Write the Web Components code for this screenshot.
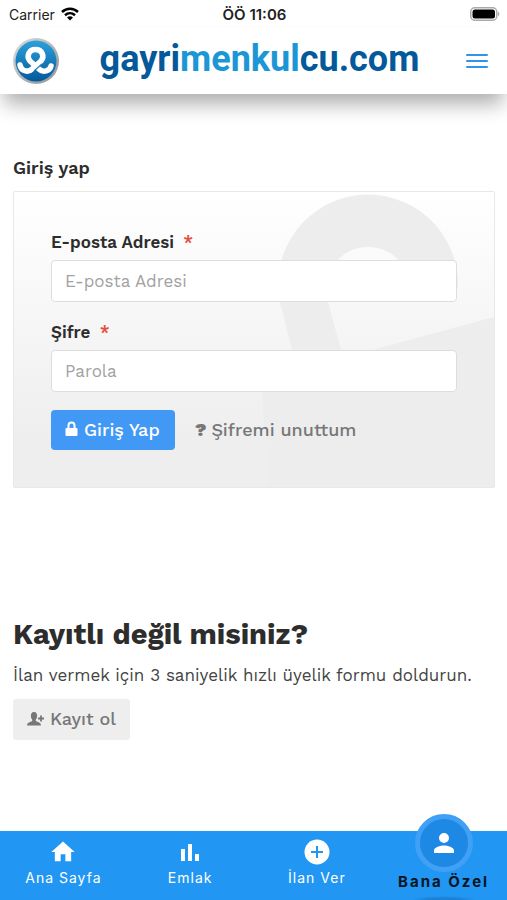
<!DOCTYPE html>
<html lang="tr">
<head>
<meta charset="utf-8">
<meta name="viewport" content="width=device-width, initial-scale=1">
<title>gayrimenkulcu.com</title>
<style>
html,body{margin:0}
body{font-family:"Work Sans",Inter,"Liberation Sans",sans-serif;color:#333;background:#fff}
</style>
</head>
<body>
<login-page></login-page>
<script>
function define(name, html, setup) {
  const tpl = document.createElement('template');
  tpl.innerHTML = html;
  customElements.define(name, class extends HTMLElement {
    connectedCallback() {
      if (this.shadowRoot) return;
      const root = this.attachShadow({mode: 'open'});
      root.append(tpl.content.cloneNode(true));
      if (setup) setup(this, root);
    }
  });
}

define('status-bar', `
<style>
:host{display:grid;grid-template-columns:1fr auto 1fr;align-items:center;height:28px;padding:0 7px 0 9px;font-family:Inter,"Liberation Sans",sans-serif;font-size:14px;color:#222}
.left{display:flex;align-items:center;gap:6px}
.time{font-size:15px;font-weight:600}
.battery{justify-self:end}
svg{display:block}
</style>
<div class="left"><span>Carrier</span>
<svg width="18" height="14" viewBox="0 0 18 14" fill="none" stroke="#000" stroke-width="2.5"><path d="M1 5C5.500 .7 12.500 .7 17 5M4 8.200C7 5.500 11 5.500 14 8.200"/><path d="M9 13.500 6 10.500Q9 8 12 10.500Z" fill="#000" stroke="none"/></svg></div>
<span class="time">ÖÖ 11:06</span>
<svg class="battery" width="30" height="14" viewBox="0 0 30 14"><rect x=".75" y=".75" width="26" height="12.500" rx="4" fill="#fff" stroke="#aaa" stroke-width="1.500"/><rect x="2.500" y="2.500" width="22.500" height="9" rx="2.500" fill="#000"/><path d="M28 4.500Q31 7 28 9.500Z" fill="#aaa"/></svg>`);

define('site-header', `
<style>
:host{display:grid;grid-template-columns:50px 1fr 22px;align-items:center;height:66px;padding:0 19px 0 11px;background:#fff;box-shadow:0 14px 20px -4px rgba(0,0,0,.32);box-sizing:border-box}
svg{display:block}
a{text-decoration:none}
.word{justify-self:center;margin-right:8px;font:700 36px/44px Roboto,"Liberation Sans",sans-serif;color:#04599b;padding-bottom:4px}
.word span{color:#1c97d5}
button{border:0;background:none;padding:0;cursor:pointer}
</style>
<a href="#" aria-label="Ana Sayfa"><svg width="50" height="50" viewBox="0 0 50 50">
<defs><linearGradient id="b" x2="0" y2="1"><stop stop-color="#2ba1dc"/><stop offset="1" stop-color="#04599b"/></linearGradient><linearGradient id="s" x2="1" y2="1"><stop stop-color="#ddd"/><stop offset="1" stop-color="#8b9297"/></linearGradient></defs>
<circle cx="25" cy="25" r="23" fill="url(#s)"/><circle cx="25" cy="25" r="20.500" fill="url(#b)"/>
<path d="M9 29C10 35 17 37 21 33L30 25C34 20 31 13.500 24.500 13.500S15 20 19 25L28 33C32 37 39 35 40 30" fill="none" stroke="#fff" stroke-width="5.500" stroke-linecap="round" stroke-linejoin="round"/><path d="M23 35 31 28" stroke="#187dbb" stroke-width="1.200"/></svg></a>
<a class="word" href="#">gayri<span>menkul</span>cu.com</a>
<button aria-label="Menü"><svg width="22" height="16" viewBox="0 0 22 16" stroke="#2e95ea" stroke-width="2" stroke-linecap="round"><path d="M1 2H21M1 8H21M1 14H21"/></svg></button>`);

define('form-field', `
<style>
:host{display:block}
label{display:block;font-size:17px;line-height:22px;font-weight:600;color:#2d2d2d}
.req{color:#e74c3c;margin-left:4px}
input{display:block;box-sizing:border-box;width:100%;height:42px;margin-top:7px;padding:0 13px;border:1px solid #ddd;border-radius:4px;background:#fff;font:17px "Work Sans",Inter,"Liberation Sans",sans-serif;color:#333;outline:0}
input::placeholder{color:#a2a2a2;opacity:1}
</style>
<label for="f"><slot></slot> <span class="req">*</span></label>
<input id="f">`, (host, root) => {
  const input = root.querySelector('input');
  input.type = host.getAttribute('type');
  input.placeholder = host.getAttribute('placeholder');
});

define('login-card', `
<style>
:host{display:block;position:relative;border:1px solid #e8e8e8;border-radius:2px;background:linear-gradient(#fff,#eee 85%);padding:39px 37px 37px;overflow:hidden}
.art{position:absolute;top:0;right:0}
form{position:relative;display:grid;gap:19px}
.actions{display:flex;align-items:center;gap:20px;margin-top:-1px}
button{display:flex;align-items:center;gap:6px;height:40px;padding:0 15px 2px 14px;border:0;border-radius:4px;background:#4299f5;color:#fff;font:500 18px "Work Sans",Inter,"Liberation Sans",sans-serif;cursor:pointer}
a{display:flex;gap:5px;padding-bottom:2px;color:#777;text-decoration:none;font-size:18px;font-weight:500}
a b{font-weight:900}
</style>
<svg class="art" width="240" height="296" viewBox="254 192 240 296" fill="#ededed" aria-hidden="true">
<path d="M283 314A90 90 0 1 1 458 288H410A42 42 0 1 0 327 298L341 350 354 355 494 317V488H268L262 391 298 374Z"/></svg>
<form onsubmit="return false">
<form-field type="email" placeholder="E-posta Adresi">E-posta Adresi</form-field>
<form-field type="password" placeholder="Parola">Şifre</form-field>
<div class="actions"><button><svg width="13" height="16" viewBox="0 0 12 16"><path d="M3 8V4.500a3 3 0 0 1 6 0V8" fill="none" stroke="#fff" stroke-width="2"/><rect y="7" width="12" height="8" rx="1" fill="#fff"/></svg>Giriş Yap</button>
<a href="#"><b>?</b><span>Şifremi unuttum</span></a></div>
</form>`);

define('signup-block', `
<style>
:host{display:block}
h2{margin:0;font-size:29px;line-height:36px;font-weight:700;color:#2d2d2d}
p{margin:12px 0 13px;font-size:17px;line-height:22px;color:#444}
a{display:inline-flex;align-items:center;gap:5px;height:39px;padding:0 14px 2px;border-radius:3px;background:#eee;color:#777;font-size:18px;font-weight:500;text-decoration:none}
</style>
<h2>Kayıtlı değil misiniz?</h2>
<p>İlan vermek için 3 saniyelik hızlı üyelik formu doldurun.</p>
<a href="#"><svg width="18" height="16" viewBox="0 0 18 16" fill="#777"><path d="M7 1C9.500 1 10.500 3 10 6 9.800 7.500 9 8 8.800 9V10L12.500 11.700Q14 12.500 14 14.500H0Q0 12.500 1.500 11.700L5.200 10V9C5 8 4.200 7.500 4 6 3.500 3 4.500 1 7 1Z"/><path d="M14 4.500V10.500M11 7.500H17" stroke="#777" stroke-width="1.800"/></svg>Kayıt ol</a>`);

define('tab-item', `
<style>
:host{display:block;color:#fff}
a{display:flex;flex-direction:column;align-items:center;color:inherit;text-decoration:none;font:14px/18px Inter,"Liberation Sans",sans-serif;letter-spacing:1px}
.icon{display:flex;align-items:center;justify-content:center;height:24px;margin:9px 0 5px;box-sizing:border-box}
:host([active]) a{font-size:15px;font-weight:700;color:#071521;letter-spacing:2px}
:host([active]) .icon{width:58px;height:58px;margin:-17px 0 1px;border:5px solid #40a0f6;border-radius:50%;background:#1e88e5}
::slotted(svg){display:block}
</style>
<a href="#"><span class="icon"><slot name="icon"></slot></span><span><slot></slot></span></a>`);

define('tab-bar', `
<style>
:host{display:grid;grid-template-columns:repeat(4,1fr);height:69px;background:radial-gradient(ellipse 32px 4px at 87.5% 100%,#1c80d4 50%,transparent) #2196f3}
</style><slot></slot>`);

define('login-page', `
<style>
:host{display:flex;flex-direction:column;min-height:100vh}
main{padding:62px 12px 24px 13px}
h1{margin:0 0 11px;font-size:18px;line-height:24px;font-weight:600;color:#2d2d2d}
signup-block{margin-top:128px}
tab-bar{margin-top:auto}
</style>
<status-bar></status-bar>
<site-header></site-header>
<main><h1>Giriş yap</h1><login-card></login-card><signup-block></signup-block></main>
<tab-bar>
<tab-item><svg slot="icon" width="28" height="28" viewBox="0 0 24 24" fill="#fff"><path d="M10 20v-6h4v6h5v-8h3L12 3 2 12h3v8z"/></svg>Ana Sayfa</tab-item>
<tab-item><svg slot="icon" width="20" height="20" viewBox="0 0 20 20" fill="#fff"><path d="M1 7H5V19H1ZM8 2H12V19H8ZM15 12H19V19H15Z"/></svg>Emlak</tab-item>
<tab-item><svg slot="icon" width="26" height="26" viewBox="0 0 26 26"><circle cx="13" cy="13" r="12.500" fill="#fff"/><path d="M13 7V19M7 13H19" stroke="#2196f3" stroke-width="2"/></svg>İlan Ver</tab-item>
<tab-item active><svg slot="icon" width="30" height="30" viewBox="0 0 24 24" fill="#fff"><path d="M12 12a4 4 0 1 0 0-8 4 4 0 0 0 0 8Zm0 2c-2.670 0-8 1.340-8 4v2h16v-2c0-2.660-5.330-4-8-4Z"/></svg>Bana Özel</tab-item>
</tab-bar>`);
</script>
</body>
</html>
